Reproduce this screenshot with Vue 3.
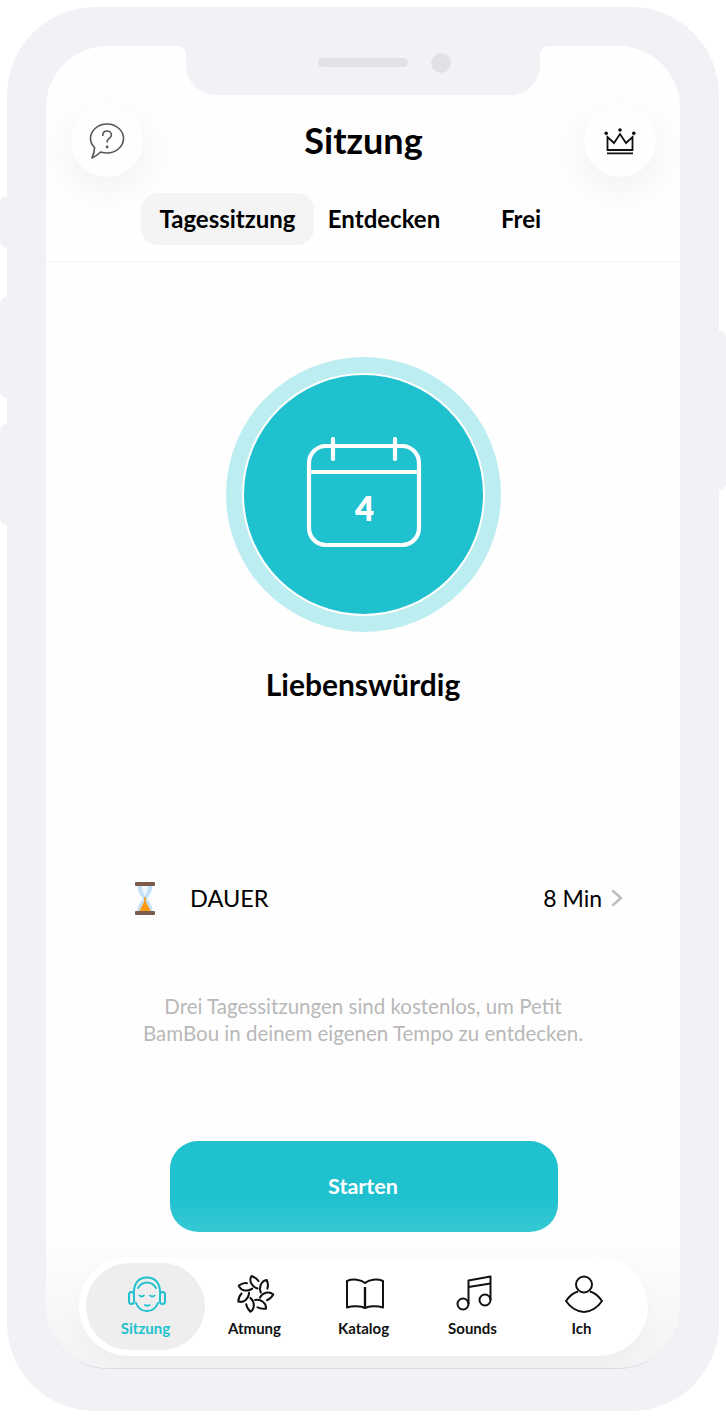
<template>
	<div class="phone">
		<i class="side side-a"></i>
		<i class="side side-b"></i>
		<i class="side side-c"></i>
		<i class="side side-d"></i>
		<div class="screen">
			<div class="notch">
				<span class="speaker"></span>
				<span class="camera"></span>
			</div>
			<header class="head">
				<div class="head-row">
					<button class="round">
						<svg width="36" height="36" viewBox="0 0 36 36" fill="none" stroke="#555" stroke-width="1.600" stroke-linejoin="round" stroke-linecap="round">
							<path d="M18 1C27 1 34.500 7.500 34.500 15.500 34.500 23.500 27 30 18 30 15.500 30 13.500 29.600 11.500 29 9 31.500 6 33.800 3 35 4.300 32 5.500 29 5.600 24.500 3.500 22.500 1.500 19 1.500 15.500 1.500 7.500 9 1 18 1z" />
							<path d="M13.800 12.500c0-3 2-4.500 4.300-4.500 2.500 0 4.300 1.700 4.300 3.900 0 3.600-4.300 3.500-4.300 7" />
							<circle cx="18.100" cy="24" r=".6" fill="#555" />
						</svg>
					</button>
					<h1>Sitzung</h1>
					<button class="round">
						<svg width="32" height="27" viewBox="0 0 32 27" fill="none" stroke="#111" stroke-width="1.800">
							<path d="M3.500 9v13h25V9L22 15 16 6l-6 9z" />
							<path d="M3 25.300h26" />
							<circle cx="2.200" cy="5.300" r="1.800" fill="#111" stroke="none" />
							<circle cx="16" cy="2" r="1.800" fill="#111" stroke="none" />
							<circle cx="29.800" cy="5.300" r="1.800" fill="#111" stroke="none" />
						</svg>
					</button>
				</div>
				<nav class="tabs">
					<a v-for="t in tabs" :key="t.label" class="tab" :class="{ on: t.on }" :style="{ width: t.width + 'px' }">{{ t.label }}</a>
				</nav>
			</header>

			<main class="main">
				<div class="disc">
					<div class="disc-inner">
						<svg class="cal" width="116" height="110" viewBox="0 0 116 110" fill="none" stroke="#fff" stroke-width="4.200" stroke-linecap="round">
							<rect x="3" y="9" width="110" height="99" rx="17" />
							<path d="M3 35h110" />
							<path d="M27 2v20M89 2v20" />
						</svg>
						<span class="day">4</span>
					</div>
				</div>
				<h2>Liebenswürdig</h2>

				<div class="duration">
					<svg class="glass" width="20" height="33" viewBox="0 0 20 33">
						<path d="M2.500 3h15c0 7-3 10-5.500 13.500 2.500 3.500 5.500 6.500 5.500 13.500h-15c0-7 3-10 5.500-13.500C5.500 13 2.500 10 2.500 3z" fill="#c4e1f8" />
						<path d="M7 4h6c0 4-1.500 7-3 10-1.500-3-3-6-3-10z" fill="#eef7fd" />
						<path d="M10 18l6 11.500H4z" fill="#fb9a0e" />
						<path d="M9.200 15h1.600v5H9.200z" fill="#fb9a0e" />
						<rect x="0" y="0" width="20" height="4" rx="1" fill="#7c5a4e" />
						<rect x="0" y="29" width="20" height="4" rx="1" fill="#7c5a4e" />
					</svg>
					<span class="dur-label">DAUER</span>
					<span class="dur-value">8 Min</span>
					<svg width="12" height="18" viewBox="0 0 12 18" fill="none" stroke="#bdbdbd" stroke-width="2.400" stroke-linecap="round" stroke-linejoin="round">
						<path d="M2 2l8 7-8 7" />
					</svg>
				</div>

				<p class="note">Drei Tagessitzungen sind kostenlos, um Petit<br />BamBou in deinem eigenen Tempo zu entdecken.</p>

				<button class="start">Starten</button>
			</main>

			<footer class="foot">
				<div class="bar">
					<a v-for="n in nav" :key="n.label" class="item" :class="{ on: n.on }">
						<svg v-if="n.icon === 'head'" class="ic-head" width="40" height="36" viewBox="0 0 40 36" fill="none" stroke="currentColor" stroke-width="2" stroke-linecap="round" stroke-linejoin="round">
							<path d="M7 16C7 7 12 1.500 20 1.500S33 7 33 16" />
							<path d="M11 12c2-3.500 5-5.500 9-5.500s7 2 9 5.500" />
							<path d="M9 27c2 5 6 8 11 8s9-3 11-8" />
							<rect x="2" y="16" width="5" height="12" rx="2.500" />
							<rect x="33" y="16" width="5" height="12" rx="2.500" />
							<path d="M12.500 19.500c1 1.300 3.300 1.300 4.300 0M23.200 19.500c1 1.300 3.300 1.300 4.300 0M18 29c1.300.8 3.200.8 4.500 0" />
						</svg>
						<svg v-else-if="n.icon === 'flower'" class="ic-flower" width="40" height="40" viewBox="0 0 40 40" fill="none" stroke="currentColor" stroke-width="2" stroke-linecap="round" stroke-linejoin="round">
							<path v-for="a in petals" :key="a" :transform="`rotate(${a} 20 20)`" d="M22.500 14.500C17 13 13.500 7 16.500 2 19.500 3 22 4.500 23.500 7" />
						</svg>
						<svg v-else-if="n.icon === 'book'" class="ic-book" width="38" height="31" viewBox="0 0 38 31" fill="none" stroke="currentColor" stroke-width="2" stroke-linejoin="round">
							<path d="M19 5C15 1.500 7 .5 1 3v26.500c6-2 14-1.500 18 .5 4-2 12-2.500 18-.5V3C31 .5 23 1.500 19 5z" />
							<path d="M19 9v21" stroke-width="2.400" />
						</svg>
						<svg v-else-if="n.icon === 'music'" class="ic-music" width="36" height="36" viewBox="0 0 36 36" fill="none" stroke="currentColor" stroke-width="2" stroke-linejoin="round">
							<circle cx="7" cy="29" r="5.500" />
							<circle cx="29" cy="25" r="5.500" />
							<path d="M12.500 29V5.500L34.500 1.500V25" />
							<path d="M12.500 12l22-3.500" />
						</svg>
						<svg v-else class="ic-person" width="40" height="38" viewBox="0 0 40 38" fill="none" stroke="currentColor" stroke-width="2" stroke-linejoin="round">
							<circle cx="20" cy="9.500" r="8" />
							<path d="M14 16.500C9 18 5 21.500 2 26c4 6 11 11 18 11s14-5 18-11c-3-4.500-7-8-12-9.500" />
						</svg>
						<span>{{ n.label }}</span>
					</a>
				</div>
			</footer>
		</div>
	</div>
</template>

<script setup>
const tabs = [
	{ label: 'Tagessitzung', width: 173, on: true },
	{ label: 'Entdecken', width: 140 },
	{ label: 'Frei', width: 134 },
];

const nav = [
	{ label: 'Sitzung', icon: 'head', on: true },
	{ label: 'Atmung', icon: 'flower' },
	{ label: 'Katalog', icon: 'book' },
	{ label: 'Sounds', icon: 'music' },
	{ label: 'Ich', icon: 'person' },
];

const petals = [0, 51.4, 102.8, 154.2, 205.6, 257, 308.4];
</script>

<style>
body {
	background: #fff;
}
</style>

<style scoped>
.phone {
	position: relative;
	box-sizing: border-box;
	width: 726px;
	height: 1419px;
	padding: 7px;
	font-family: "Lato", "Noto Sans", sans-serif;
	color: #000;
}

.phone::before {
	content: "";
	position: absolute;
	left: 7px;
	top: 7px;
	width: 712px;
	height: 1404px;
	border-radius: 88px;
	background: #f1f1f6;
}

.side {
	position: absolute;
	background: #f1f1f6;
}

.side-a, .side-b, .side-c {
	left: 0;
	width: 8px;
	border-radius: 7px 0 0 7px;
}

.side-a { top: 196px; height: 52px; }
.side-b { top: 297px; height: 101px; }
.side-c { top: 424px; height: 101px; }

.side-d {
	right: 0;
	top: 331px;
	width: 8px;
	height: 159px;
	border-radius: 0 7px 7px 0;
}

.screen {
	position: relative;
	display: flex;
	flex-direction: column;
	box-sizing: border-box;
	width: 634px;
	height: 1323px;
	margin: 39px;
	overflow: hidden;
	border-radius: 62px;
	background: #fefefe;
	border-bottom: 1px solid #dcdce0;
}

.notch {
	position: absolute;
	left: 140px;
	top: 0;
	z-index: 2;
	display: flex;
	align-items: center;
	box-sizing: border-box;
	width: 354px;
	height: 49px;
	padding: 0 0 16px 132px;
	border-radius: 0 0 30px 30px;
	background: #f1f1f6;
}

.notch::before, .notch::after {
	content: "";
	position: absolute;
	top: 0;
	width: 8px;
	height: 8px;
}

.notch::before {
	left: -8px;
	background: radial-gradient(circle at 0 100%, transparent 7.500px, #f1f1f6 8px);
}

.notch::after {
	right: -8px;
	background: radial-gradient(circle at 100% 100%, transparent 7.500px, #f1f1f6 8px);
}

.speaker {
	width: 90px;
	height: 9px;
	border-radius: 5px;
	background: #e1e1e8;
}

.camera {
	width: 20px;
	height: 20px;
	margin-left: 23px;
	border-radius: 50%;
	background: #e1e1e8;
}

.head {
	flex: none;
	box-sizing: border-box;
	height: 216px;
	padding: 59px 24px 0 25px;
	border-bottom: 1px solid #f2f2f2;
	background: linear-gradient(#fff 0, #fdfdfd 50%, #fff 100%);
}

.head-row {
	display: flex;
	align-items: center;
	justify-content: space-between;
}

.round {
	display: flex;
	align-items: center;
	justify-content: center;
	width: 72px;
	height: 72px;
	padding: 0;
	border: none;
	border-radius: 50%;
	background: #fefefe;
	box-shadow: 0 12px 34px rgba(0, 0, 0, 0.05);
}

h1 {
	margin: -2px 0 0;
	font-size: 36px;
	font-weight: 700;
	line-height: 42px;
}

.tabs {
	display: flex;
	margin: 16px 0 0 70px;
}

.tab {
	box-sizing: border-box;
	height: 52px;
	border-radius: 17px;
	font-size: 24px;
	font-weight: 700;
	line-height: 52px;
	text-align: center;
}

.tab.on {
	background: #f4f4f4;
}

.main {
	flex: 1;
	display: flex;
	flex-direction: column;
	align-items: center;
}

.disc {
	display: flex;
	align-items: center;
	justify-content: center;
	width: 275px;
	height: 275px;
	margin-top: 95px;
	border-radius: 50%;
	background: #bcedf1;
}

.disc-inner {
	position: relative;
	display: flex;
	align-items: center;
	justify-content: center;
	width: 239px;
	height: 239px;
	border: 2.500px solid #fff;
	border-radius: 50%;
	background: #1fc1cf;
}

.cal {
	margin: -5px 0 0 1px;
}

.day {
	position: absolute;
	left: 3px;
	right: 0;
	top: 113px;
	color: #fff;
	font-size: 33px;
	font-weight: 800;
	line-height: 40px;
	text-align: center;
}

h2 {
	margin: 32px 0 0;
	font-size: 30px;
	font-weight: 700;
	line-height: 40px;
}

.duration {
	display: flex;
	align-items: center;
	align-self: stretch;
	height: 40px;
	margin-top: 174px;
	padding: 0 57px 0 89px;
	font-size: 23px;
}

.glass {
	flex: none;
}

.dur-label {
	flex: 1;
	margin-left: 35px;
	font-size: 23.500px;
}

.dur-value {
	margin-right: 9px;
}

.note {
	margin: 75px 0 0;
	color: #b8b8b8;
	font-size: 20.500px;
	line-height: 27px;
	text-align: center;
}

.start {
	width: 388px;
	height: 91px;
	margin: 94px 0 0 2px;
	padding: 0 2px 2px 0;
	border: none;
	border-radius: 28px;
	background: linear-gradient(#1fc1cf, #1fc1cf 60%, #36c9d4);
	color: #fff;
	font-family: inherit;
	font-size: 21.500px;
	font-weight: 700;
}

.foot {
	flex: none;
	margin-top: auto;
	padding: 18px 32px 12px 33px;
	background: linear-gradient(#fefefe, #f3f3f5);
}

.bar {
	display: grid;
	grid-template-columns: repeat(5, 109px);
	box-sizing: border-box;
	height: 99px;
	padding: 6px 12px;
	border-radius: 50px;
	background: #fff;
	box-shadow: 0 6px 20px rgba(0, 0, 0, 0.03);
}

.item {
	display: flex;
	flex-direction: column;
	align-items: center;
	justify-content: flex-end;
	box-sizing: border-box;
	height: 87px;
	padding-bottom: 13px;
	color: #111;
	font-size: 15px;
	font-weight: 700;
}

.ic-head { margin: 0 0 7px 3px; }
.ic-flower { margin: 0 0 5px 1px; }
.ic-book { margin: 0 0 10px 2px; }
.ic-music { margin: 0 0 8px 2px; }
.ic-person { margin: 0 0 6px 5px; }

.item.on {
	margin: 0 -5px;
	border-radius: 44px;
	background: #eeeeee;
	color: #1fc1cf;
}
</style>
